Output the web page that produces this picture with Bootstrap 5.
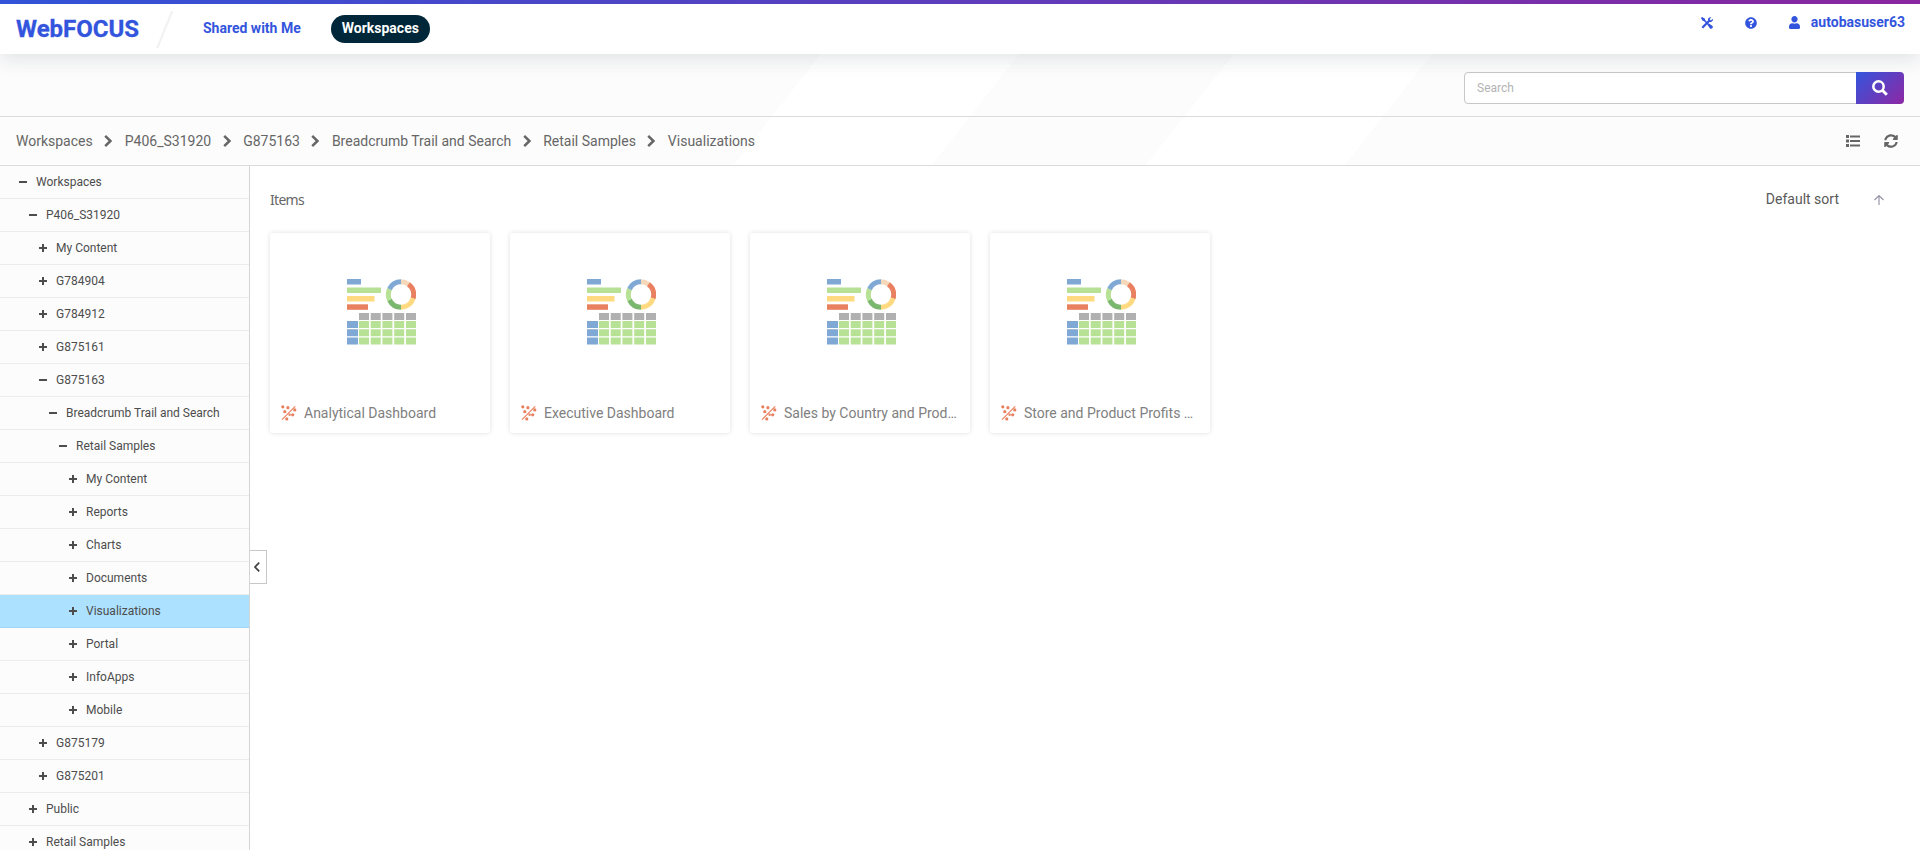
<!DOCTYPE html>
<html lang="en">
<head>
<meta charset="utf-8">
<meta name="viewport" content="width=device-width, initial-scale=1">
<title>WebFOCUS</title>
<link href="https://cdn.jsdelivr.net/npm/bootstrap@5.3.0/dist/css/bootstrap.min.css" rel="stylesheet">
<style>
  body { font-family: Roboto, "Liberation Sans", sans-serif; height: 100vh; font-size: 14px; color: #595959; }
  svg { display: block; flex: none; }
  .topline { height: 4px; background: linear-gradient(90deg, #3355dd, #8e27a3); }
  .mainbar { height: 50px; padding-left: 16px; padding-right: 15px; color: #3355dd; font-weight: 700; box-shadow: 0 5px 20px rgba(0,42,60,.12); z-index: 2; }
  .brand { font-size: 24px; line-height: 50px; width: 124px; margin-right: 16px; -webkit-text-stroke: .3px #3355dd; }
  .slash { margin-top: 7px; }
  .tabs { margin: 11px 0 0 29px; }
  .tab1 { line-height: 26px; margin-top: -2px; }
  .pill { height: 28px; line-height: 26px; padding: 0 11px; border-radius: 14px; margin-left: 30px; background: #00263a; color: #fff; }
  .usertools { height: 36px; padding-top: 1px; }
  .backdrop { background: #fcfcfc; }
  .backdrop > svg.stripes { position: absolute; left: 0; top: 0; }
  .searchrow { height: 63px; padding-right: 16px; border-bottom: 1px solid #dbdbdb; }
  .searchbox { width: 440px; height: 32px; margin-top: 6px; }
  .searchbox .form-control { border: 1px solid #c7c7c7; font-size: 12px; padding: 0 12px; border-radius: 4px 0 0 4px; }
  .searchbox .form-control::placeholder { color: #b3b3b3; }
  .searchbox .btn { width: 48px; border: 0; padding: 0 0 0 16px; border-radius: 0 4px 4px 0; background: linear-gradient(135deg, #3355dd, #8e27a3); }
  .crumbrow { height: 49px; padding: 0 22px 0 16px; border-bottom: 1px solid #dbdbdb; color: #666; }
  .crumbrow svg.sep { margin: 0 12.500px 0 11.500px; }
  .side { width: 250px; background: #fcfcfc; border-right: 1px solid #d4d4d4; font-size: 12px; color: #4d4d4d; }
  .node { height: 33px; flex: none; border-bottom: 1px solid #ececec; padding-bottom: 1px; }
  .node.sel { background: #ace1ff; border-color: #9fd4f2; }
  .node svg { margin-right: 9px; }
  .lv0 { padding-left: 19px; } .lv1 { padding-left: 29px; } .lv2 { padding-left: 39px; }
  .lv3 { padding-left: 49px; } .lv4 { padding-left: 59px; } .lv5 { padding-left: 69px; }
  .fold { position: absolute; left: 0; top: 384px; width: 17px; height: 34px; border: 1px solid #c7c7c7; border-left: 0; background: #fff; }
  .listhead { height: 67px; padding: 0 36px 1px 20px; }
  .items { font-family: "Noto Sans", sans-serif; font-size: 14px; color: #666; letter-spacing: -.7px; }
  .tiles { padding-left: 20px; gap: 20px; }
  .tile { width: 220px; height: 200px; border-radius: 3px; box-shadow: 0 0 5px rgba(0,42,40,.14); }
  .thumb { height: 160px; padding: 46px 0 0 76.500px; }
  .tilename { height: 40px; padding: 0 8px 0 11px; color: #808080; }
  .tilename svg { margin-right: 7px; }
</style>
</head>
<body class="d-flex flex-column overflow-hidden">
<svg width="0" height="0" class="position-absolute" aria-hidden="true">
  <symbol id="sep" viewBox="0 0 8 12"><path d="M1.2.9 6.4 6 1.2 11.1" fill="none" stroke="#666" stroke-width="2.5"/></symbol>
  <symbol id="plus" viewBox="0 0 8 8"><path d="M0 3h3V0h2v3h3v2H5v3H3V5H0z" fill="#4d4d4d"/></symbol>
  <symbol id="minus" viewBox="0 0 8 8"><path d="M0 3h8v2H0z" fill="#4d4d4d"/></symbol>
  <symbol id="scatter" viewBox="0 0 16 16">
    <path d="M1 14.6 14.2 1.4" stroke="#e9805f" stroke-width="1.2"/>
    <g fill="#e9805f"><circle cx="1.8" cy="1.8" r="1.6"/><circle cx="6.9" cy="2.7" r="1.6"/><circle cx="3.8" cy="6.7" r="1.6"/><circle cx="13.8" cy="4.9" r="1.6"/><circle cx="8.6" cy="9.8" r="1.2"/><circle cx="11.7" cy="9.8" r="1.6"/><circle cx="5.8" cy="13.9" r="1.6"/></g>
  </symbol>
  <symbol id="dash" viewBox="0 0 69 66">
    <path d="M0 0h14v5.5H0zM0 42h11v7H0zM0 50.300h11v7H0zM0 58.600h11v7H0z" fill="#7fa8d4"/>
    <path d="M0 8.500h34v5.500H0z" fill="#b7e195"/><path d="M0 17h27.500v5.500H0z" fill="#ffda80"/><path d="M0 25.300h21v5.500H0z" fill="#e9805f"/>
    <path d="M12 34h10v7H12zM23.700 34h10v7H23.700zM35.400 34h10v7H35.400zM47.200 34h10v7H47.200zM59 34h10v7H59z" fill="#b0b0b0"/>
    <path d="M12 42h10v7H12zM23.700 42h10v7H23.700zM35.400 42h10v7H35.400zM47.200 42h10v7H47.200zM59 42h10v7H59zM12 50.300h10v7H12zM23.700 50.300h10v7H23.700zM35.400 50.300h10v7H35.400zM47.200 50.300h10v7H47.200zM59 50.300h10v7H59zM12 58.600h10v7H12zM23.700 58.600h10v7H23.700zM35.400 58.600h10v7H35.400zM47.200 58.600h10v7H47.200zM59 58.600h10v7H59z" fill="#b7e195"/>
    <g fill="none" stroke-width="5" transform="rotate(-90 54 15.500)">
      <circle cx="54" cy="15.500" r="12.700" pathLength="100" stroke="#f6d9bb" stroke-dasharray="10 90"/>
      <circle cx="54" cy="15.500" r="12.700" pathLength="100" stroke="#e9805f" stroke-dasharray="20 80" stroke-dashoffset="-10"/>
      <circle cx="54" cy="15.500" r="12.700" pathLength="100" stroke="#ffda80" stroke-dasharray="20 80" stroke-dashoffset="-30"/>
      <circle cx="54" cy="15.500" r="12.700" pathLength="100" stroke="#7ab870" stroke-dasharray="18 82" stroke-dashoffset="-50"/>
      <circle cx="54" cy="15.500" r="12.700" pathLength="100" stroke="#b7e195" stroke-dasharray="14 86" stroke-dashoffset="-68"/>
      <circle cx="54" cy="15.500" r="12.700" pathLength="100" stroke="#7fa8d4" stroke-dasharray="18 82" stroke-dashoffset="-82"/>
    </g>
  </symbol>
</svg>

<div class="topline flex-shrink-0"></div>
<header class="mainbar d-flex align-items-start bg-white position-relative flex-shrink-0">
  <div class="brand">WebFOCUS</div>
  <svg class="slash" width="18" height="37" viewBox="0 0 18 37"><path d="M15 0h2.500L2.500 37H0z" fill="#f2f2f2"/></svg>
  <nav class="tabs d-flex align-items-center">
    <span class="tab1">Shared with Me</span>
    <span class="pill">Workspaces</span>
  </nav>
  <div class="usertools d-flex align-items-center ms-auto">
    <svg width="12" height="12" viewBox="0 0 12 12"><path d="M1 1l10 10" stroke="#3355dd" stroke-width="1.600"/><path d="M0 .9.900 0l2.900 1.600.5 1.900-.8.800-1.900-.5zM6.500 8 8 6.500l3.500 2.500c1.200 1.200-1.300 3.700-2.500 2.500z" fill="#3355dd"/><path d="M1.300 10.700 8.500 3.500" stroke="#3355dd" stroke-width="2.300"/><path d="M10.300.3 8.800 1.900l.2 1.200 1.200.2 1.600-1.600c.7 2-1 3.600-3 3.200L7 3.200C6.700 1.300 8.300-.4 10.300.3z" fill="#3355dd"/></svg>
    <svg width="12" height="12" viewBox="0 0 512 512" style="margin-left:32px"><path fill="#3355dd" d="M504 256c0 137-111 248-248 248S8 393 8 256C8 119.100 119 8 256 8s248 111.100 248 248zM262.700 90c-54.500 0-89.300 23-116.500 63.800-3.500 5.300-2.400 12.400 2.700 16.300l34.700 26.300c5.200 3.900 12.600 3 16.700-2.100 17.900-22.700 30.100-35.800 57.300-35.800 20.400 0 45.700 13.100 45.700 33 0 15-12.400 22.700-32.500 34C247.100 238.500 216 254.900 216 296v4c0 6.600 5.400 12 12 12h56c6.600 0 12-5.400 12-12v-1.300c0-28.500 83.200-29.600 83.200-106.700 0-58-60.200-102-116.500-102zM256 338c-25.400 0-46 20.600-46 46s20.600 46 46 46 46-20.600 46-46-20.600-46-46-46z"/></svg>
    <svg width="11" height="13" viewBox="0 0 448 512" style="margin-left:32px" preserveAspectRatio="none"><path fill="#3355dd" d="M224 256c70.700 0 128-57.300 128-128S294.700 0 224 0 96 57.300 96 128s57.300 128 128 128zm89.600 32h-16.700c-22.200 10.200-46.900 16-72.900 16s-50.600-5.800-72.900-16h-16.700C60.200 288 0 348.200 0 422.400V464c0 26.500 21.500 48 48 48h352c26.500 0 48-21.500 48-48v-41.600c0-74.200-60.200-134.400-134.400-134.400z"/></svg>
    <span style="margin-left:11px">autobasuser63</span>
  </div>
</header>

<section class="backdrop position-relative flex-shrink-0">
  <svg class="stripes" width="1920" height="112" viewBox="0 0 1920 112"><path d="M821 0h198l-88 112H733zM1234 0h198l-88 112h-199z" fill="#fff"/></svg>
  <div class="searchrow d-flex align-items-center justify-content-end position-relative">
    <div class="searchbox input-group flex-nowrap">
      <input class="form-control" type="text" placeholder="Search">
      <button class="btn" type="button" aria-label="Search"><svg width="16" height="16" viewBox="0 0 16 16" fill="none" stroke="#fff"><circle cx="6.500" cy="6.500" r="5.200" stroke-width="2.500"/><path d="m10.300 10.300 4.500 4.500" stroke-width="3"/></svg></button>
    </div>
  </div>
  <div class="crumbrow d-flex align-items-center position-relative">
    <span>Workspaces</span><svg class="sep" width="8" height="12"><use href="#sep"/></svg>
    <span>P406_S31920</span><svg class="sep" width="8" height="12"><use href="#sep"/></svg>
    <span>G875163</span><svg class="sep" width="8" height="12"><use href="#sep"/></svg>
    <span>Breadcrumb Trail and Search</span><svg class="sep" width="8" height="12"><use href="#sep"/></svg>
    <span>Retail Samples</span><svg class="sep" width="8" height="12"><use href="#sep"/></svg>
    <span>Visualizations</span>
    <svg class="ms-auto" width="14" height="12" viewBox="0 0 14 12"><path d="M0 0h3v3H0zM0 4.500h3v3H0zM0 9h3v3H0zM4 .5h10v2H4zM4 5h10v2H4zM4 9.500h10v2H4z" fill="#666"/></svg>
    <svg width="14" height="14" viewBox="0 0 512 512" style="margin-left:24px"><path fill="#666" d="M370.720 133.280C339.458 104.008 298.888 87.962 255.848 88c-77.458.068-144.328 53.178-162.791 126.850-1.344 5.363-6.122 9.150-11.651 9.150H24.103c-7.498 0-13.194-6.807-11.807-14.176C33.933 94.924 134.813 8 256 8c66.448 0 126.791 26.136 171.315 68.685L463.030 40.970C478.149 25.851 504 36.559 504 57.941V192c0 13.255-10.745 24-24 24H345.941c-21.382 0-32.090-25.851-16.971-40.971l41.750-41.749zM32 296h134.059c21.382 0 32.090 25.851 16.971 40.971l-41.750 41.750c31.262 29.273 71.835 45.319 114.876 45.280 77.418-.07 144.315-53.144 162.787-126.849 1.344-5.363 6.122-9.150 11.651-9.150h57.304c7.498 0 13.194 6.807 11.807 14.176C478.067 417.076 377.187 504 256 504c-66.448 0-126.791-26.136-171.315-68.685L48.970 471.030C33.851 486.149 8 475.441 8 454.059V320c0-13.255 10.745-24 24-24z"/></svg>
  </div>
</section>

<main class="d-flex flex-grow-1 overflow-hidden">
  <aside class="side d-flex flex-column flex-shrink-0 overflow-hidden" id="tree"></aside>
  <section class="flex-grow-1 position-relative">
    <div class="listhead d-flex align-items-center">
      <span class="items">Items</span>
      <span class="ms-auto">Default sort</span>
      <svg width="10" height="10" viewBox="0 0 10 10" style="margin-left:35px;margin-top:2px"><path d="M5 10V.7M.5 5 5 .6 9.500 5" fill="none" stroke="#8f8fa3" stroke-width="1.100"/></svg>
    </div>
    <div class="tiles d-flex" id="tiles"></div>
    <button class="fold d-flex align-items-center justify-content-center p-0 pe-1" type="button" aria-label="Collapse"><svg width="7" height="10" viewBox="0 0 7 10"><path d="M6.200.7 2 5l4.200 4.300" fill="none" stroke="#404040" stroke-width="1.700"/></svg></button>
  </section>
</main>

<script src="https://cdn.jsdelivr.net/npm/bootstrap@5.3.0/dist/js/bootstrap.bundle.min.js"></script>
<script>
  const nodes = [
    [0,'minus','Workspaces'],[1,'minus','P406_S31920'],[2,'plus','My Content'],[2,'plus','G784904'],[2,'plus','G784912'],
    [2,'plus','G875161'],[2,'minus','G875163'],[3,'minus','Breadcrumb Trail and Search'],[4,'minus','Retail Samples'],
    [5,'plus','My Content'],[5,'plus','Reports'],[5,'plus','Charts'],[5,'plus','Documents'],[5,'plus','Visualizations'],
    [5,'plus','Portal'],[5,'plus','InfoApps'],[5,'plus','Mobile'],[2,'plus','G875179'],[2,'plus','G875201'],
    [1,'plus','Public'],[1,'plus','Retail Samples']];
  document.getElementById('tree').innerHTML = nodes.map(([lv, ic, t]) =>
    `<div class="node d-flex align-items-center lv${lv}${t === 'Visualizations' ? ' sel' : ''}"><svg width="8" height="8"><use href="#${ic}"/></svg><span>${t}</span></div>`).join('');
  const tiles = ['Analytical Dashboard','Executive Dashboard','Sales by Country and Prod…','Store and Product Profits …'];
  document.getElementById('tiles').innerHTML = tiles.map(t =>
    `<div class="tile bg-white"><div class="thumb"><svg width="69" height="66"><use href="#dash"/></svg></div>
     <div class="tilename d-flex align-items-center"><svg width="16" height="16"><use href="#scatter"/></svg><span class="text-nowrap">${t}</span></div></div>`).join('');
</script>
</body>
</html>
